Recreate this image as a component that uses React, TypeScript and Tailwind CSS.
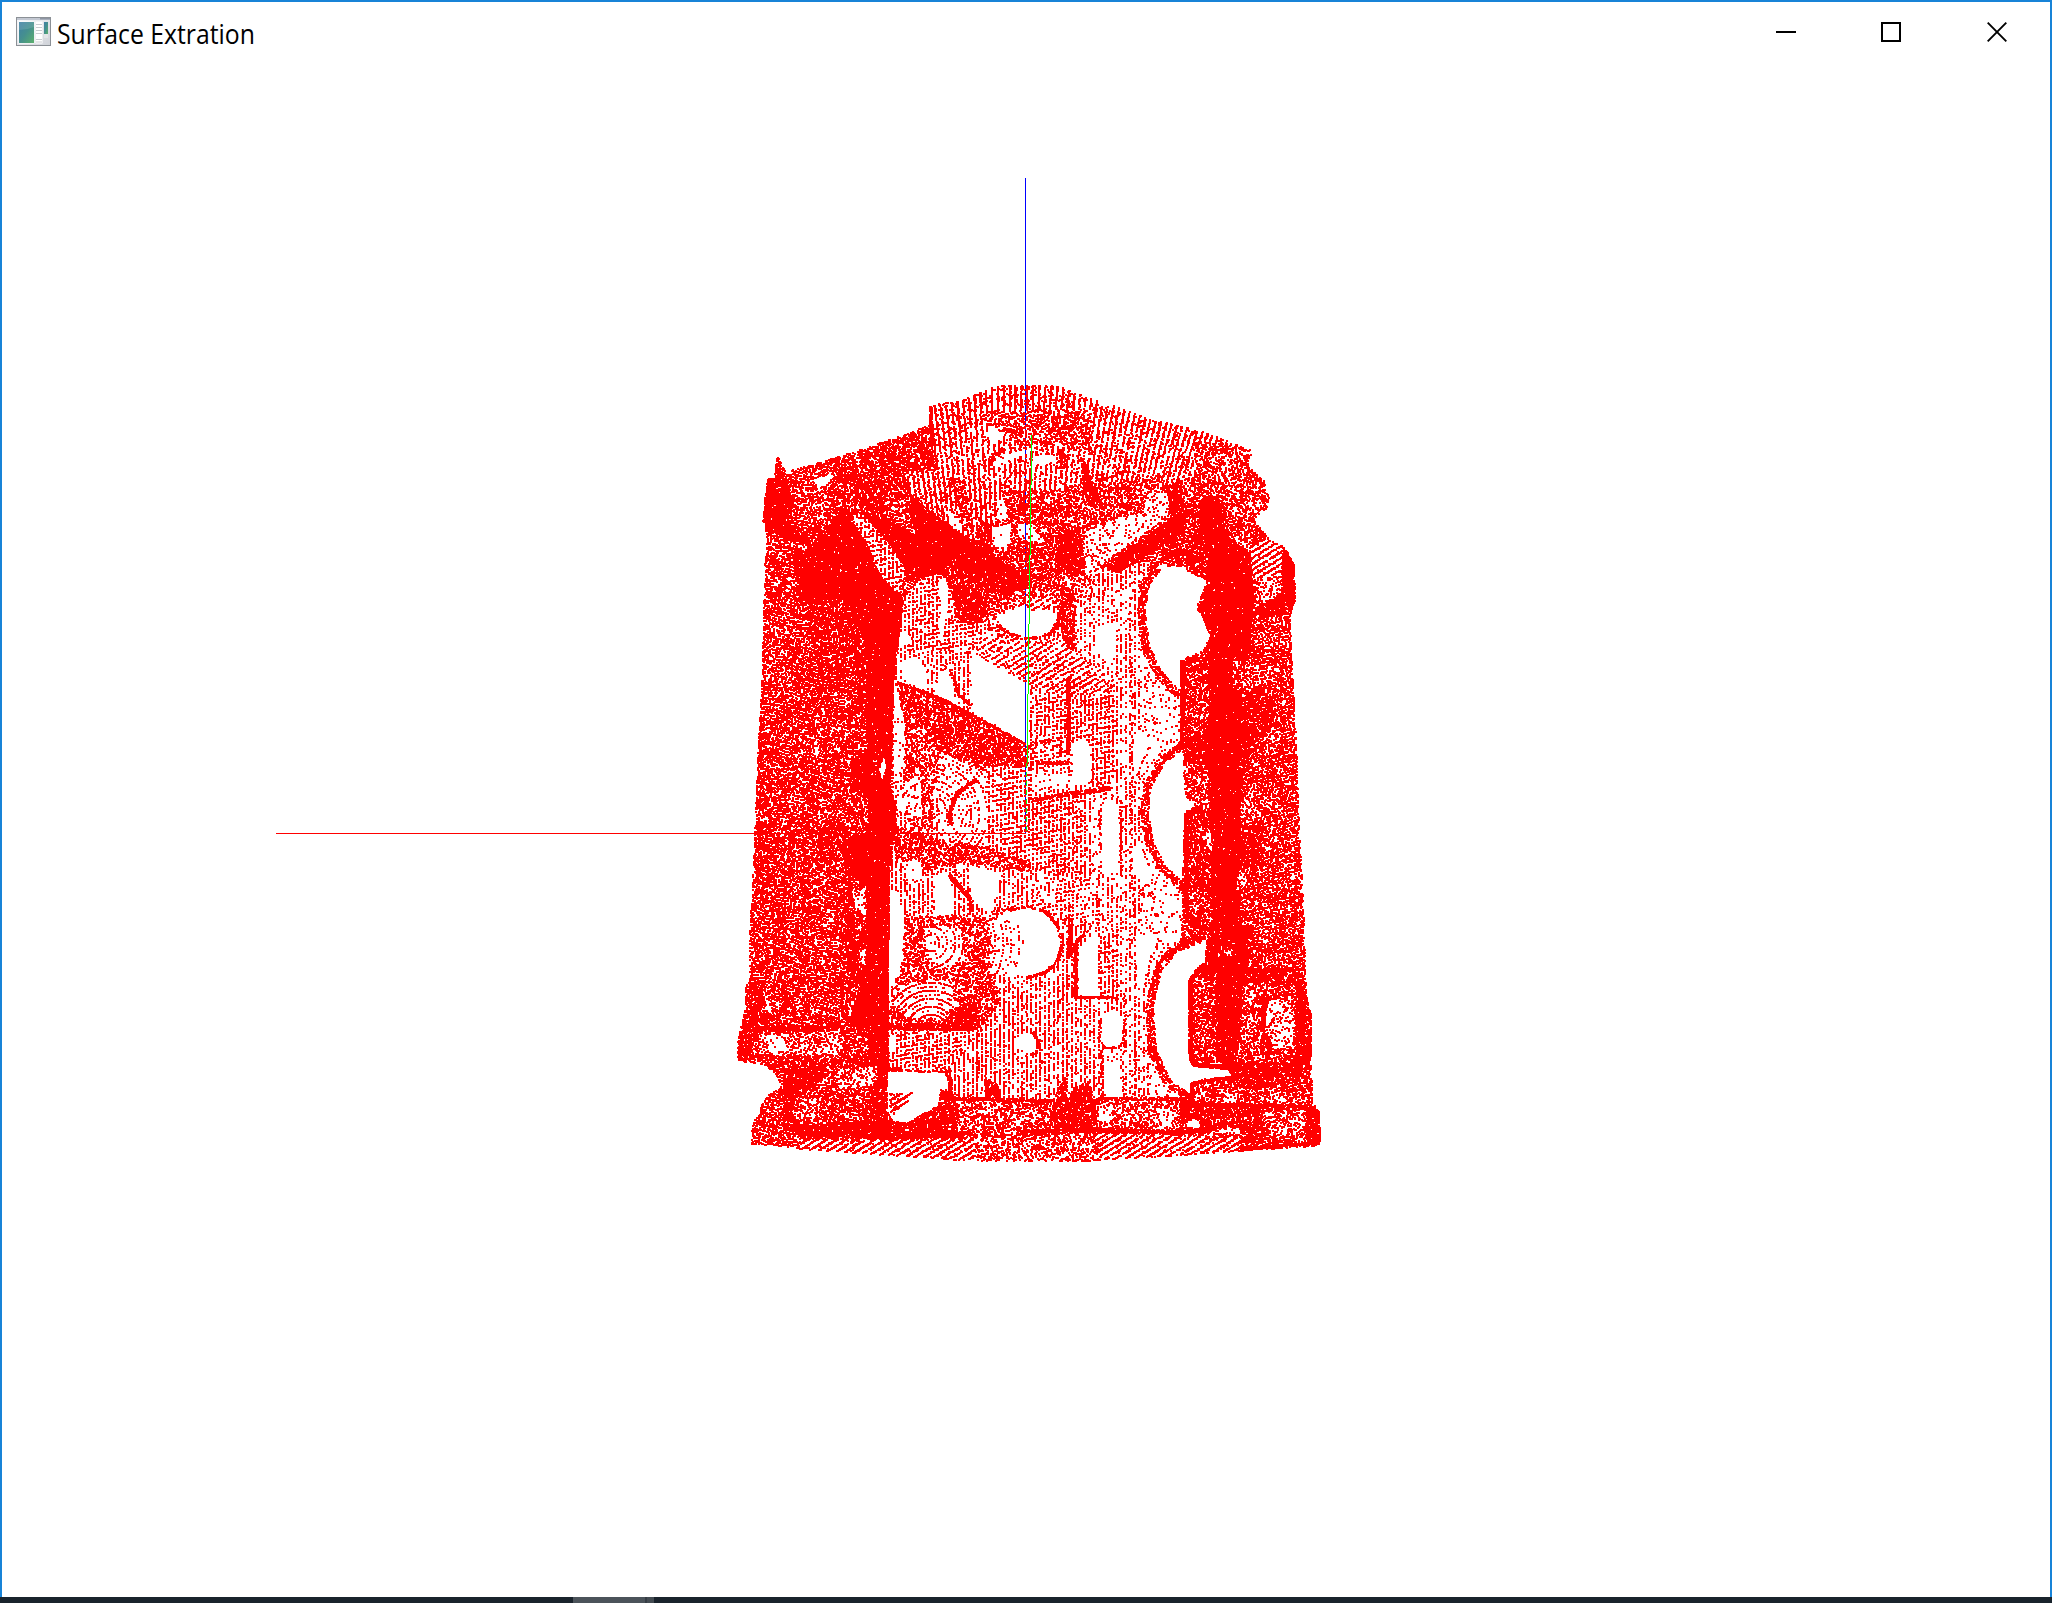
import React, { useMemo } from "react";

// Window onto the viewport that holds the scanned part.
const OX = 730;
const OY = 375;
const W = 600;
const H = 795;

// r: scattered, c: vertical scan columns, g: regular lattice, d: diagonal scan lines,
// f: fan of columns, w: woven rows, o: concentric arcs
type Pattern = "r" | "c" | "g" | "d" | "f" | "w" | "o";
type Area = [Pattern, number, string];
type Edge = [number, number, string];

const AREAS: Area[] = [
  ["w", 0.78, "776,457 778,457 785,471 830,458 865,447 929,424 930,404 960,400 990,387 996,385 1060,385 1064,388 1100,400 1150,418 1200,430 1230,441 1250,449 1252,470 1264,480 1269,498 1266,510 1254,519 1260,528 1270,540 1282,545 1286,550 1294,565 1295,600 1290,615 1291,650 1292,670 1296,740 1299,830 1303,900 1304,930 1305,960 1306,995 1310,1012 1311,1050 1312,1107 1319,1108 1320,1143 1313,1146 1250,1150 1180,1155 1130,1158 1070,1161 1000,1161 960,1160 920,1157 860,1153 800,1149 775,1145 751,1144 750,1135 752,1120 758,1115 761,1103 768,1094 780,1084 775,1073 763,1064 737,1061 737,1040 740,1026 744,1010 745,985 748,980 749,930 753,850 757,750 761,680 762,640 764,560 766,550 766,530 762,520 764,497 768,478 773,477"],
  // darker zones of the left bank
  ["w", 0.88, "790,650 868,640 868,720 840,690 800,690"],
  ["r", 0.85, "762,820 868,825 868,870 800,870 762,850"],
  ["r", 0.86, "757,720 772,720 768,900 752,900"],
  ["r", 0.85, "835,880 868,870 868,1025 840,1010"],
  // upper fan
  ["f", 0.9, "930,404 960,400 990,387 996,385 1060,385 1100,400 1150,418 1200,430 1230,441 1250,449 1250,465 1205,475 1165,490 1130,480 1095,485 1030,478 985,485 955,478 935,470"],
  ["f", 1.3, "930,404 960,400 990,388 1060,386 1078,394 1078,440 1030,446 1000,420 975,425 960,440 950,450 932,445"],
  ["r", 0.68, "975,412 1090,408 1092,455 1062,446 1030,448 1000,430 985,424"],
  ["f", 1.3, "1090,405 1150,418 1200,430 1250,449 1250,470 1215,462 1200,445 1140,432 1090,420"],
  ["r", 0.7, "1195,440 1250,449 1252,470 1264,480 1269,498 1262,512 1235,520 1215,495 1170,492 1172,482 1195,475"],
  ["r", 0.87, "870,450 928,428 936,480 915,503 870,515 840,503 832,478"],
  ["w", 0.7, "795,475 835,468 832,520 800,525 785,500"],
  ["r", 0, "813,479 830,474 828,483 818,487"],
  ["f", 1.2, "905,470 945,470 955,500 975,540 955,530 910,495"],
  ["r", 0.1, "945,510 958,514 962,532 952,527"],
  ["f", 1.3, "965,480 1000,480 1002,500 990,550 975,545 970,520"],
  ["r", 0, "987,425 994,425 1002,438 994,443 987,437"],
  ["f", 1, "990,466 1032,458 1060,450 1075,460 1080,485 1052,490 1000,490"],
  ["r", 0.05, "993,462 1000,455 1028,448 1028,453 1008,460 1001,467 995,465"],
  ["r", 0.05, "1035,455 1052,454 1058,460 1040,466 1034,464"],
  ["r", 0.1, "996,498 1004,500 1007,518 998,520"],
  ["r", 0.03, "993,527 1011,522 1010,540 1000,548 993,545"],
  ["r", 0.12, "1016,522 1042,526 1044,542 1020,540"],
  ["r", 0.72, "1030,500 1075,485 1110,480 1160,475 1168,492 1145,498 1140,510 1085,528 1040,535 1030,525"],
  ["r", 0.22, "1084,532 1115,518 1140,512 1148,492 1168,492 1168,515 1110,558 1084,578"],
  ["r", 0.95, "1060,535 1080,525 1084,570 1070,580 1055,560"],
  ["r", 0.97, "1080,455 1087,465 1097,500 1090,505 1083,490"],
  // central web
  ["c", 0.5, "900,600 925,575 1000,600 1030,590 1110,565 1150,562 1143,610 1150,655 1180,690 1180,745 1182,900 1180,940 1150,1000 1165,1070 1185,1098 1095,1100 1060,1100 945,1100 888,1090 887,930 893,790 893,650"],
  ["g", 1, "905,600 930,570 953,580 950,650 905,650"],
  ["g", 1, "950,620 1000,620 1030,635 1030,680 972,650 950,665"],
  ["r", 0.65, "985,595 1040,585 1070,580 1060,605 1026,603 1000,612 985,620"],
  ["r", 0.5, "1060,580 1095,570 1090,600 1085,650 1062,650"],
  ["r", 0.87, "1060,585 1075,590 1074,650 1062,650"],
  ["r", 0.16, "1076,600 1140,585 1140,650 1180,692 1180,740 1150,775 1143,810 1150,860 1182,890 1180,940 1155,960 1148,1010 1160,1070 1180,1097 1095,1097 1090,800 1115,775 1115,690 1076,660"],
  ["c", 0.32, "1076,600 1140,590 1143,650 1140,880 1148,1000 1150,1095 1098,1095 1090,880 1115,780 1115,690 1080,660"],
  ["r", 0, "1096,625 1114,622 1115,658 1105,660 1096,650"],
  ["r", 0, "940,578 947,578 947,612 940,645"],
  ["r", 0, "898,630 908,632 910,644 898,646"],
  // bearing bore, upper
  ["r", 0, "993,618 1010,610 1026,606 1045,609 1058,613 1052,627 1040,636 1026,637 1008,632 996,624"],
  ["d", 1.1, "1026,598 1055,597 1060,606 1046,609 1028,610"],
  ["d", 0.9, "985,630 1000,628 1026,642 1060,636 1072,650 1115,680 1112,692 1060,695 1030,688 975,652"],
  // right counterweight bores
  ["r", 0, "1155,568 1163,564 1182,566 1190,572 1207,580 1200,597 1196,607 1203,620 1210,635 1203,650 1183,658 1181,695 1165,680 1150,655 1143,610 1146,585"],
  ["r", 0, "1182,743 1163,758 1150,785 1147,810 1152,842 1165,868 1182,885 1184,812 1195,805 1184,795 1183,760"],
  ["r", 0, "1206,936 1180,945 1160,965 1152,1000 1155,1050 1172,1085 1190,1097 1190,1082 1200,1080 1235,1075 1232,1069 1200,1067 1189,1060 1188,982 1195,970 1205,965"],
  // left of the centre web
  ["r", 0.08, "893,685 900,690 908,725 905,765 893,785"],
  ["r", 0.82, "895,682 940,697 985,722 1028,745 1028,768 985,770 958,772 930,745 905,725"],
  ["r", 0.7, "905,715 940,745 930,830 908,830 903,780"],
  ["o", 0.8, "899,790 920,770 922,815 900,812"],
  ["o", 0.8, "938,750 985,772 985,850 940,842 936,790"],
  ["g", 1.2, "985,765 1030,765 1030,865 985,850"],
  ["r", 0.75, "893,825 940,838 990,848 1030,862 1030,872 960,862 930,870 895,860"],
  ["r", 0, "900,662 908,657 918,658 925,668 925,690 910,683 901,678"],
  ["r", 0, "937,670 948,670 952,690 957,703 936,695"],
  ["r", 0, "972,652 1030,685 1027,744 1000,727 972,712"],
  ["r", 0.1, "900,862 918,858 922,880 912,890"],
  ["r", 0, "937,875 948,873 954,893 950,915 935,915 934,890"],
  ["r", 0, "972,865 1000,872 997,890 990,914 972,900"],
  ["r", 0.15, "985,914 1005,905 1000,925 985,930"],
  ["r", 0.7, "905,915 985,915 1000,905 1025,907 995,925 990,960 1000,1000 980,1030 900,1027 888,1010 900,975"],
  ["r", 0, "889,890 898,892 904,930 901,960 893,985 888,987"],
  ["o", 1.1, "925,925 960,925 965,960 940,970 925,960"],
  ["o", 1.5, "895,985 952,978 955,1018 915,1020 893,1005"],
  ["r", 0.93, "950,1010 975,998 980,1027 940,1030"],
  ["g", 1, "890,1033 995,1030 995,1070 945,1071 888,1070"],
  ["r", 0, "886,1036 896,1036 896,1052 885,1050"],
  ["c", 0.6, "948,1070 1000,1010 1068,1000 1068,1085 1052,1098 950,1098"],
  // lattices on the right half of the web
  ["g", 1, "1034,700 1067,695 1067,738 1034,738"],
  ["g", 1.3, "1070,700 1115,690 1117,778 1090,788 1070,735"],
  ["r", 0, "1072,742 1080,739 1090,745 1090,782 1068,785 1072,765"],
  ["g", 0.7, "1034,742 1072,742 1072,775 1034,775"],
  ["r", 0.03, "1034,776 1068,773 1066,786 1036,788"],
  ["g", 1.4, "1030,800 1083,790 1083,873 1030,868"],
  ["r", 0, "1098,805 1118,803 1118,873 1098,873"],
  ["r", 0, "1133,737 1142,731 1152,740 1150,750 1140,775 1132,775"],
  ["r", 0, "1132,845 1140,848 1152,882 1142,885 1133,870"],
  ["g", 0.7, "1030,880 1098,878 1098,925 1065,925 1050,908 1030,905"],
  ["r", 0, "1078,950 1085,940 1098,932 1098,995 1078,995"],
  ["g", 1.3, "1100,935 1118,928 1118,995 1100,995"],
  ["r", 0, "1103,1012 1118,1012 1122,1018 1122,1042 1116,1048 1103,1047 1099,1040 1099,1020"],
  ["r", 0, "1135,945 1142,935 1158,936 1150,960 1140,990 1135,980"],
  ["r", 0, "1104,1062 1120,1060 1121,1096 1105,1095"],
  ["c", 0.55, "1030,1000 1068,1000 1068,1090 1030,1098"],
  // bore interiors, centre
  ["r", 0, "1026,907 1044,912 1057,925 1061,942 1057,960 1044,972 1026,976 1008,974 996,965 990,945 994,922 1006,910"],
  ["o", 0.7, "1000,915 1022,928 1026,946 1022,960 1008,974 990,972 990,925"],
  ["r", 0, "1020,1033 1030,1032 1037,1040 1036,1050 1030,1054 1018,1049 1015,1040"],
  // solid structures, upper left
  ["r", 0.97, "776,457 785,478 795,505 785,520 805,530 812,545 795,540 770,530 763,525 763,497 768,478 774,477"],
  ["r", 0.985, "843,508 853,512 866,540 885,570 903,600 897,650 893,660 850,650 843,603 800,597 793,557 813,543 825,530"],
  ["r", 0.88, "805,600 845,598 868,650 868,690 835,670 810,640"],
  ["g", 1.5, "852,513 862,513 890,545 905,568 904,580 897,593 880,575 867,545 855,527"],
  ["r", 0.985, "863,512 880,515 915,535 947,557 945,572 907,580 904,565 890,545"],
  ["r", 0.985, "905,503 915,500 970,540 985,550 1028,578 1026,588 1005,595 985,590 955,570 925,555 915,530"],
  ["r", 0.92, "940,565 1005,580 990,605 980,622 957,622 950,590"],
  ["r", 0.95, "975,540 982,520 990,525 992,560 978,560"],
  ["r", 0.987, "866,650 895,650 893,690 891,760 890,790 897,810 893,840 889,870 889,890 888,990 888,1128 868,1128 868,1028 848,1028 856,1000 866,980 866,885 858,882 843,860 843,840 852,835 868,832 868,795 850,790 851,760 866,752"],
  ["r", 0, "880,762 885,758 886,768 882,780 879,772"],
  ["r", 0.4, "850,890 865,887 866,918 855,905"],
  ["r", 0.95, "843,930 868,930 868,990 850,985"],
  ["r", 0.3, "859,950 866,948 865,965 858,962"],
  // lower left flange
  ["r", 0.94, "748,983 765,980 764,1000 775,1020 740,1026 744,1010"],
  ["r", 0.1, "762,990 765,992 773,1014 768,1014"],
  ["r", 0.97, "740,1026 975,1022 975,1030 745,1031"],
  ["w", 0.5, "758,1034 840,1030 840,1052 760,1056"],
  ["r", 0.05, "768,1044 782,1034 786,1048 770,1054"],
  ["r", 0.94, "738,1030 752,1030 752,1060 738,1060"],
  ["r", 0.96, "782,1060 830,1056 820,1080 795,1100 785,1125 778,1120 784,1085"],
  ["r", 0.9, "740,1054 870,1056 870,1066 780,1068 764,1062"],
  ["r", 0.5, "835,1070 878,1065 876,1085 838,1088"],
  ["r", 0.55, "797,1102 820,1098 815,1118 796,1116"],
  ["r", 0.93, "860,1088 888,1090 888,1130 865,1125"],
  ["r", 0, "887,1071 945,1072 948,1087 942,1090 936,1112 920,1118 900,1125 890,1118 887,1108"],
  ["d", 1.7, "889,1093 918,1092 906,1102 890,1118"],
  ["r", 0.92, "940,1088 958,1095 956,1130 898,1128 925,1112 938,1105"],
  ["r", 0.98, "780,1125 888,1120 955,1130 985,1136 900,1138 800,1136"],
  ["d", 1.5, "800,1139 900,1140 985,1138 1095,1132 1180,1135 1240,1138 1240,1150 1130,1158 1060,1161 1000,1161 900,1156 800,1149"],
  ["r", 0.6, "975,1140 1095,1134 1100,1161 975,1161"],
  ["r", 0.65, "958,1098 1055,1100 1055,1133 985,1134 957,1130"],
  ["r", 0.93, "984,1075 998,1085 1000,1100 985,1098"],
  ["r", 0.93, "1052,1100 1065,1076 1068,1102 1072,1088 1090,1080 1097,1130 1095,1136 1055,1125"],
  ["r", 0.6, "1095,1100 1185,1098 1190,1130 1097,1130"],
  ["r", 0.1, "1098,1108 1112,1106 1110,1122 1098,1120"],
  ["r", 0.1, "1160,1108 1171,1108 1172,1128 1160,1122"],
  // right bank
  ["r", 0.9, "1185,540 1195,530 1210,560 1225,582 1205,578 1186,570"],
  ["r", 0.987, "1200,500 1218,495 1225,535 1250,552 1253,600 1248,660 1246,720 1240,800 1240,930 1210,930 1210,830 1205,730 1209,690 1205,650 1210,635 1203,620 1199,607 1212,580 1207,560 1199,540"],
  ["r", 0.93, "1165,485 1180,480 1187,510 1172,515"],
  ["d", 1.5, "1250,545 1270,540 1283,548 1280,580 1254,580"],
  ["r", 0.5, "1255,578 1280,578 1280,592 1256,606"],
  ["r", 0.98, "1282,550 1286,548 1294,565 1295,600 1288,612 1255,616 1256,607 1281,594"],
  ["r", 0.985, "1108,563 1172,517 1186,511 1182,532 1150,553 1118,572 1108,570"],
  ["r", 0.82, "1180,662 1190,655 1208,651 1208,735 1182,745"],
  ["r", 0.95, "1183,738 1208,730 1210,763 1184,765"],
  ["r", 0.75, "1184,765 1208,765 1208,800 1195,802 1185,790"],
  ["r", 0.85, "1185,812 1195,807 1210,808 1212,925 1190,923 1185,900"],
  ["r", 0.1, "1205,832 1211,832 1212,852 1206,845"],
  ["r", 0.93, "1240,690 1262,690 1275,715 1255,750 1240,760"],
  ["r", 0.65, "1232,660 1255,660 1250,690 1232,690"],
  ["r", 0.65, "1243,790 1256,790 1255,820 1243,815"],
  ["r", 0.93, "1240,825 1260,825 1262,865 1240,870"],
  ["r", 0.5, "1236,875 1250,865 1248,885 1236,890"],
  ["r", 0.98, "1206,935 1248,925 1248,968 1240,1040 1230,1062 1215,1060 1212,985 1196,968 1207,960"],
  ["r", 0.35, "1226,946 1231,946 1231,956 1226,956"],
  ["r", 0.78, "1192,975 1216,975 1216,1062 1194,1060"],
  ["r", 0.7, "1242,985 1262,985 1262,1045 1240,1045"],
  ["r", 0.9, "1248,966 1300,966 1300,985 1248,982"],
  ["w", 0.35, "1267,1000 1290,998 1294,1020 1292,1048 1275,1050 1264,1030"],
  ["r", 0.97, "1294,960 1306,995 1311,1015 1311,1050 1308,1070 1297,1070 1295,1010"],
  ["r", 0.95, "1225,1062 1310,1062 1305,1078 1290,1080 1255,1090 1235,1085"],
  ["r", 0.45, "1265,1095 1278,1092 1285,1102 1266,1104"],
  ["r", 0.8, "1192,1085 1235,1078 1240,1100 1192,1100"],
  ["r", 0.3, "1222,1094 1238,1092 1236,1102 1224,1103"],
  ["r", 0.92, "1180,1100 1262,1105 1262,1140 1180,1130"],
  ["r", 0.2, "1185,1120 1200,1120 1198,1128 1186,1127"],
  ["r", 0.15, "1212,1130 1240,1127 1240,1134 1215,1133"],
  ["r", 0.6, "1270,1112 1305,1110 1305,1133 1270,1138"],
  ["r", 0.97, "1306,1107 1319,1108 1320,1143 1306,1143"],
];

// Edges and creases: thickness, coverage, points
const EDGES: Edge[] = [
  [8, 0.78, "1156,567 1144,582 1140,610 1144,645 1156,672 1178,695"],
  [8, 0.78, "1180,744 1160,760 1146,785 1143,812 1148,842 1160,866 1182,888"],
  [8, 0.8, "1200,937 1172,948 1156,970 1148,1005 1151,1050 1166,1082 1188,1098"],
  [3, 0.95, "1182,742 1165,756 1152,775"],
  [3, 0.95, "1204,936 1180,944 1166,955"],
  [3, 0.95, "1150,570 1156,564 1168,556 1185,551"],
  [3, 0.85, "1163,564 1182,564"],
  [4, 0.9, "1060,606 1058,618 1052,630 1042,636"],
  [3, 0.8, "991,612 998,626 1010,634 1026,639 1040,636"],
  [3, 0.95, "1044,911 1056,924 1061,942 1057,958 1045,971 1026,976"],
  [2, 0.9, "1008,910 1026,906 1044,911"],
  [3, 0.8, "1032,1032 1037,1040 1036,1050 1030,1054"],
  [4, 0.98, "1067,678 1067,754"],
  [4, 0.98, "1069,918 1068,955"],
  [4, 0.98, "1074,945 1074,998"],
  [3, 0.95, "1074,945 1084,932"],
  [2, 0.98, "1074,997 1117,997"],
  [4, 0.9, "1030,800 1065,794 1110,788"],
  [3, 0.85, "1030,762 1072,763"],
  [3, 0.8, "1031,756 1036,742 1062,738"],
  [2, 0.9, "1059,740 1059,762"],
  [4, 0.95, "975,778 955,793 950,806 948,824"],
  [3, 0.9, "950,672 957,693 970,705"],
  [4, 0.95, "948,875 962,890 970,900 970,916"],
  [3, 0.8, "950,860 955,875"],
  [2, 0.95, "897,682 940,698 985,722 1028,746"],
  [4, 0.98, "1181,660 1181,740"],
  [3, 0.98, "1195,654 1182,664"],
  [4, 0.98, "1185,812 1185,905 1190,924 1212,930"],
  [3, 0.98, "1195,806 1184,814"],
  [4, 0.98, "1210,968 1195,970 1189,980 1189,1050 1192,1064 1235,1068"],
  [3, 0.98, "1191,1100 1191,1084 1202,1080 1236,1077"],
  [3, 0.85, "1212,970 1294,971"],
  [4, 0.93, "1268,996 1262,1010 1261,1028 1268,1050"],
  [3, 0.95, "1180,1105 1250,1104 1315,1107"],
  [3, 0.97, "1250,1148 1315,1142"],
  [4, 0.97, "1030,1131 1100,1130 1180,1132 1215,1128"],
  [3, 0.9, "950,1098 1030,1100 1060,1100 1100,1099 1185,1098"],
  [4, 0.95, "945,1071 949,1080 949,1100"],
  [2, 0.9, "887,1070 945,1071"],
  [3, 0.98, "929,406 931,440"],
  [3, 0.6, "1098,805 1098,873"],
  [3, 0.6, "1119,800 1120,875"],
  [2, 0.5, "1130,650 1131,735 1130,860 1134,930"],
  [2, 0.6, "1152,738 1144,755 1136,775"],
  [2, 0.6, "1159,938 1150,955 1144,985"],
  [2, 0.6, "1099,1018 1099,1040 1105,1048 1118,1047 1123,1040 1123,1018"],
  [2, 0.65, "1123,995 1122,1098"],
  [2, 0.55, "1134,960 1134,1098"],
  [3, 0.7, "1100,1050 1101,1098"],
  [4, 0.85, "848,885 850,900 845,905 850,925 845,935"],
  [4, 0.9, "990,462 992,455 1004,448"],
  [5, 0.9, "1058,450 1064,458 1060,468"],
  [3, 0.85, "1098,480 1112,476 1125,470"],
  [5, 0.85, "768,478 766,530"],
];

const parse = (s: string) => s.split(" ").map((p) => p.split(",").map(Number));

function makeRandom(seed: number) {
  let a = seed;
  return () => {
    a = (a + 0x6d2b79f5) | 0;
    let t = Math.imul(a ^ (a >>> 15), 1 | a);
    t = (t + Math.imul(t ^ (t >>> 7), 61 | t)) ^ t;
    return ((t ^ (t >>> 14)) >>> 0) / 4294967296;
  };
}

function inside(poly: number[][], x: number, y: number) {
  let hit = false;
  for (let i = 0, j = poly.length - 1; i < poly.length; j = i++) {
    const [xi, yi] = poly[i];
    const [xj, yj] = poly[j];
    if (yi > y !== yj > y && x < ((xj - xi) * (y - yi)) / (yj - yi) + xi) hit = !hit;
  }
  return hit;
}

// Chance that a 2x2 scan point starts on the given pixel.
function chance(kind: Pattern, cover: number, x: number, y: number) {
  const base = 1 - Math.pow(1 - Math.min(cover, 0.995), 0.25);
  if (kind === "r") return base;
  if (kind === "w") {
    const slope = x < 1000 ? -0.22 : 0.3;
    const k = ((Math.floor(y + x * slope + Math.sin(x * 0.11 + y * 0.05) * 1.6) % 3) + 3) % 3;
    return k === 0 ? base * 1.75 : base * 0.68;
  }
  if (kind === "c") {
    const k = x % 9;
    return k === 0 || k === 4 ? Math.min(1, cover * 0.85) : k === 6 ? cover * 0.16 : 0.008;
  }
  if (kind === "g") {
    const row = (y + Math.floor(x / 6)) % (cover > 1.1 ? 5 : 4);
    return x % 4 === 0 && row === 0 ? 0.9 * Math.min(1, cover) : x % 4 === 0 || row === 0 ? 0.22 * cover : 0.01;
  }
  if (kind === "d") {
    const k = Math.floor(y + x * 0.62) % 6;
    return k === 0 ? cover * 0.6 : k === 1 ? cover * 0.22 : 0.03;
  }
  if (kind === "o") {
    const cy = y < 870 ? 812 : y < 975 ? 942 : 1030;
    const k = Math.floor(Math.hypot(x - 930, y - cy)) % 8;
    return k === 0 ? cover * 0.45 : k === 4 ? cover * 0.15 : 0.01;
  }
  const u = x + ((y - 385) * (x - 1010)) / 520;
  const k = ((u % 6) + 6) % 6;
  return k < 1.1 ? Math.min(0.9, cover * 0.66) : k < 2.2 ? cover * 0.2 : cover * 0.05;
}

function buildCloud() {
  const rnd = makeRandom(7321);
  const owner = new Int16Array(W * H).fill(-1);
  AREAS.forEach(([, , pts], n) => {
    const poly = parse(pts);
    const xs = poly.map((p) => p[0]);
    const ys = poly.map((p) => p[1]);
    for (let y = Math.max(OY, Math.min(...ys)); y <= Math.max(...ys); y++)
      for (let x = Math.max(OX, Math.min(...xs)); x <= Math.max(...xs); x++)
        if (inside(poly, x + 0.5, y + 0.5)) owner[(y - OY) * W + x - OX] = n;
  });
  // Nothing is scanned outside the silhouette.
  const hull = parse(AREAS[0][2]);
  const ink = new Uint8Array(W * H);
  const dot = (x: number, y: number) => {
    for (let j = 0; j < 2; j++)
      for (let i = 0; i < 2; i++) {
        const px = x + i - OX;
        const py = y + j - OY;
        if (px >= 0 && px < W && py >= 0 && py < H) ink[py * W + px] = 1;
      }
  };
  for (let y = 0; y < H; y++)
    for (let x = 0; x < W; x++) {
      const n = owner[y * W + x];
      if (n < 0) continue;
      const [kind, cover] = AREAS[n];
      if (cover === 0 || !inside(hull, x + OX, y + OY)) continue;
      if (rnd() < chance(kind, cover, x + OX, y + OY)) dot(x + OX, y + OY);
    }
  EDGES.forEach(([thick, cover, pts]) => {
    const line = parse(pts);
    const p = 1 - Math.pow(1 - cover, 0.25);
    for (let s = 1; s < line.length; s++) {
      const [x0, y0] = line[s - 1];
      const [x1, y1] = line[s];
      const len = Math.hypot(x1 - x0, y1 - y0);
      for (let t = 0; t < len; t++)
        for (let o = 0; o < thick; o++) {
          if (rnd() > p) continue;
          const off = o - thick / 2;
          const x = x0 + ((x1 - x0) * t) / len - ((y1 - y0) / len) * off;
          const y = y0 + ((y1 - y0) * t) / len + ((x1 - x0) / len) * off;
          dot(Math.round(x), Math.round(y));
        }
    }
  });
  let d = "";
  for (let y = 0; y < H; y++)
    for (let x = 0; x < W; x++) {
      if (!ink[y * W + x]) continue;
      const start = x;
      while (x < W && ink[y * W + x]) x++;
      d += `M${start + OX} ${y + OY}h${x - start}v1h-${x - start}z`;
    }
  return d;
}

function AppIcon() {
  return (
    <svg width="36" height="30" viewBox="0 0 36 30" className="block shrink-0">
      <defs>
        <linearGradient id="pane" x1="0" y1="0" x2="1" y2="1">
          <stop offset="0" stopColor="#3f7fa6" />
          <stop offset="0.5" stopColor="#45908e" />
          <stop offset="1" stopColor="#5cb06c" />
        </linearGradient>
        <linearGradient id="frame" x1="0" y1="0" x2="1" y2="1">
          <stop offset="0" stopColor="#f8f9fb" />
          <stop offset="1" stopColor="#cfd2d8" />
        </linearGradient>
      </defs>
      <g transform="translate(2 2)">
        <rect x="0.5" y="0.5" width="34" height="28" fill="url(#frame)" stroke="#8b9096" />
        <rect x="1" y="1" width="33" height="2" fill="#c3c8d2" />
        <rect x="24" y="1" width="10" height="1.5" fill="#8f96a3" />
        <rect x="2.5" y="4.500" width="16" height="22" fill="#fff" />
        <rect x="3" y="5" width="15" height="21" fill="url(#pane)" />
        <path d="M3 5h15v5q-7 3-15 3z" fill="#fff" opacity="0.12" />
        <rect x="19.500" y="4.500" width="7" height="22" fill="#fff" />
        <path d="M20 7.500h6M20 10.500h6M20 13.500h6M20 16.500h6M20 22.500h6M20 25h6" stroke="#c9ccd0" />
        <rect x="28" y="5" width="4" height="12" fill="url(#pane)" />
        <rect x="28" y="17" width="4" height="4" fill="#e4e6e8" />
      </g>
    </svg>
  );
}

function TitleBar() {
  return (
    <header className="flex h-[62px] shrink-0 items-start justify-between bg-white">
      <div className="flex pt-[15px] pl-[14px]">
        <div className="-mt-[2px] -ml-[2px] h-[32px] w-[38px] [&>svg]:overflow-visible">
          <AppIcon />
        </div>
        <h1 className="-mt-[1px] ml-[5px] origin-left scale-x-[0.935] text-[26.5px] leading-[36px] whitespace-nowrap text-black [font-family:'Open_Sans','Noto_Sans',sans-serif]">
          Surface Extration
        </h1>
      </div>
      <div className="flex gap-[85px] pt-5 pr-[43px]">
        <button aria-label="Minimize" className="flex h-5 w-5 items-center">
          <span className="block h-[2px] w-5 bg-black" />
        </button>
        <button aria-label="Maximize" className="block h-5 w-5 border-2 border-black" />
        <button aria-label="Close" className="ml-px block h-5 w-5">
          <svg width="20" height="20" viewBox="0 0 20 20" className="block">
            <path d="M0.700 0.700L19.300 19.300M19.300 0.700L0.700 19.300" stroke="#000" strokeWidth="1.900" />
          </svg>
        </button>
      </div>
    </header>
  );
}

function Viewport() {
  const cloud = useMemo(buildCloud, []);
  return (
    <svg
      viewBox="2 64 2048 1533"
      width="2048"
      height="1533"
      className="block shrink-0 bg-white"
      shapeRendering="crispEdges"
    >
      <rect x="1025" y="178" width="1" height="655" fill="#00f" />
      <path d={cloud} fill="#f00" />
      <rect x="276" y="833" width="750" height="1" fill="#f00" />
      <path
        d="M1031 435h1v50h-1zM1030 485h1v70h-1zM1029 555h1v69h-1zM1028 624h1v70h-1zM1027 694h1v69h-1z"
        fill="#0f0"
      />
      <path d="M1026.500 763V833" stroke="#0f0" strokeDasharray="5 4" />
    </svg>
  );
}

export default function App() {
  return (
    <div className="flex h-[1603px] w-[2052px] flex-col overflow-hidden bg-white">
      <main className="flex h-[1597px] shrink-0 flex-col border-x-2 border-t-2 border-[#1883d7]">
        <TitleBar />
        <Viewport />
      </main>
      <footer className="flex h-[6px] shrink-0 bg-[#19232c]">
        <div className="ml-[573px] w-[72px] bg-[#4b535a]" />
        <div className="w-[2px] bg-[#353d45]" />
        <div className="w-[7px] bg-[#434b52]" />
      </footer>
    </div>
  );
}
